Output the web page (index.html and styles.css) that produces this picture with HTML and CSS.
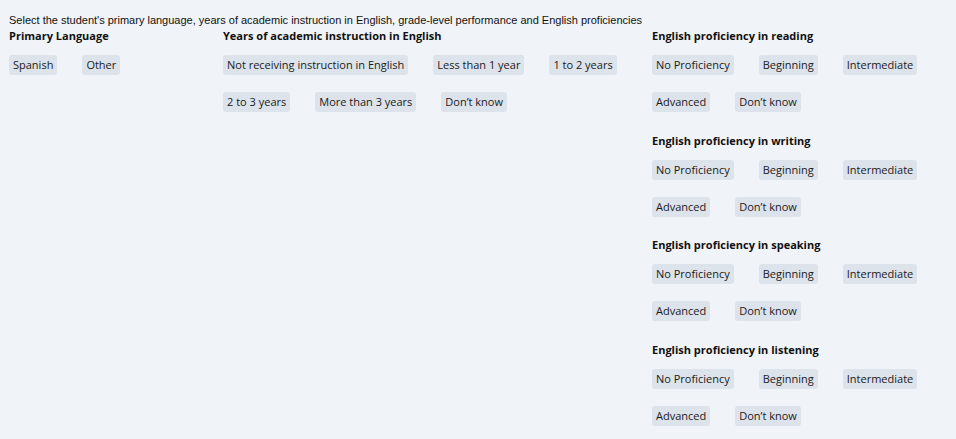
FILE: index.html
```html
<!DOCTYPE html>
<html lang="en">
<head>
  <meta charset="UTF-8">
  <title>Student Language Profile</title>
  <link rel="stylesheet" href="styles.css">
</head>
<body>
  <p class="prompt">Select the student's primary language, years of academic instruction in English, grade-level performance and English proficiencies</p>

  <div class="columns">
    <div class="column col-language">
      <div class="group">
        <h3>Primary Language</h3>
        <div class="options">
          <span class="chip">Spanish</span>
          <span class="chip">Other</span>
        </div>
      </div>
    </div>

    <div class="column col-years">
      <div class="group">
        <h3>Years of academic instruction in English</h3>
        <div class="options">
          <span class="chip">Not receiving instruction in English</span>
          <span class="chip">Less than 1 year</span>
          <span class="chip">1 to 2 years</span>
          <span class="chip">2 to 3 years</span>
          <span class="chip">More than 3 years</span>
          <span class="chip">Don’t know</span>
        </div>
      </div>
    </div>

    <div class="column col-proficiency">
      <div class="group">
        <h3>English proficiency in reading</h3>
        <div class="options">
          <span class="chip">No Proficiency</span>
          <span class="chip">Beginning</span>
          <span class="chip">Intermediate</span>
          <span class="chip">Advanced</span>
          <span class="chip">Don’t know</span>
        </div>
      </div>
      <div class="group">
        <h3>English proficiency in writing</h3>
        <div class="options">
          <span class="chip">No Proficiency</span>
          <span class="chip">Beginning</span>
          <span class="chip">Intermediate</span>
          <span class="chip">Advanced</span>
          <span class="chip">Don’t know</span>
        </div>
      </div>
      <div class="group">
        <h3>English proficiency in speaking</h3>
        <div class="options">
          <span class="chip">No Proficiency</span>
          <span class="chip">Beginning</span>
          <span class="chip">Intermediate</span>
          <span class="chip">Advanced</span>
          <span class="chip">Don’t know</span>
        </div>
      </div>
      <div class="group">
        <h3>English proficiency in listening</h3>
        <div class="options">
          <span class="chip">No Proficiency</span>
          <span class="chip">Beginning</span>
          <span class="chip">Intermediate</span>
          <span class="chip">Advanced</span>
          <span class="chip">Don’t know</span>
        </div>
      </div>
    </div>
  </div>
</body>
</html>
```

FILE: styles.css
```css
body {
  margin: 0;
  padding: 13px 9px 0;
  background-color: #f0f3f7;
  color: #1a1a1a;
  font-family: "Open Sans", sans-serif;
  font-size: 11px;
}

.prompt {
  margin: 0;
  font-family: "Liberation Sans", Arial, sans-serif;
  font-size: 11px;
  line-height: 14px;
  color: #111;
}

.columns {
  display: grid;
  grid-template-columns: 214px 429px 1fr;
  margin-top: 1px;
}

.group {
  height: 104.5px;
}

h3 {
  margin: 0 0 11px;
  font-size: 11px;
  font-weight: 700;
  line-height: 16px;
  color: #111;
}

.options {
  display: flex;
  flex-wrap: wrap;
  column-gap: 25px;
  row-gap: 17px;
}

.chip {
  display: inline-block;
  height: 20px;
  line-height: 20px;
  padding: 0 4px;
  background-color: #dde3eb;
  border-radius: 3px;
  white-space: nowrap;
  cursor: pointer;
}

.col-years .options {
  max-width: 420px;
}

.col-proficiency .options {
  max-width: 290px;
}
```
